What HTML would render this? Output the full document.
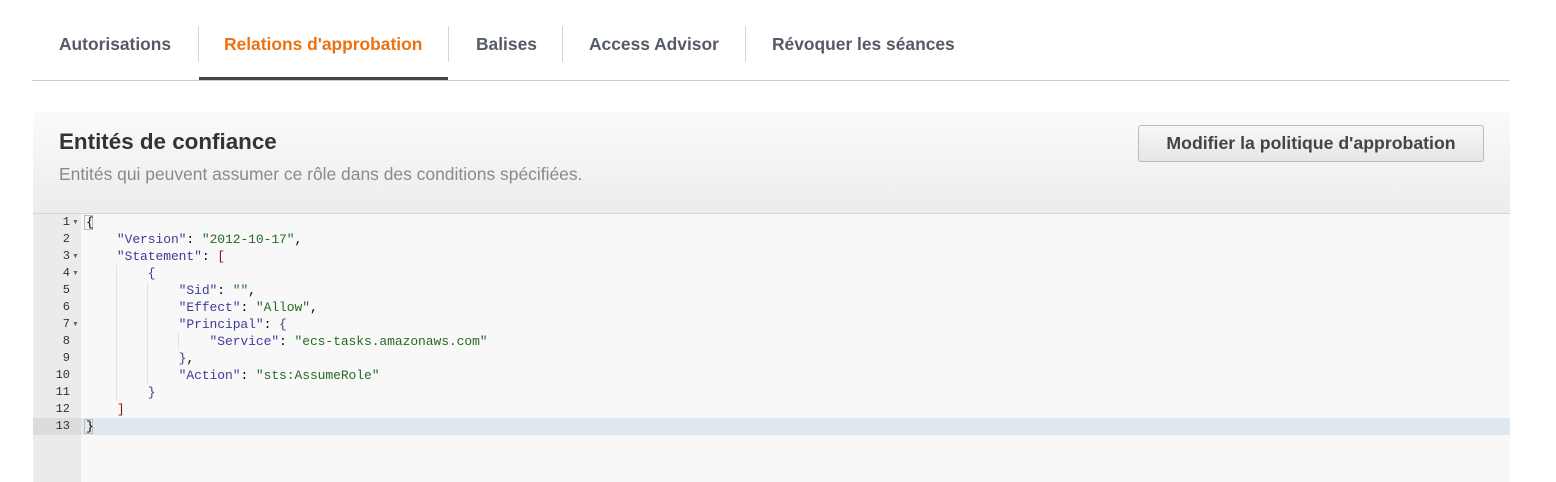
<!DOCTYPE html>
<html><head><meta charset="utf-8"><style>
body{margin:0;width:1556px;height:482px;background:#fff;font-family:"Liberation Sans",Arial,sans-serif;overflow:hidden;position:relative}
.tab{position:absolute;top:34px;font-size:17.4px;font-weight:bold;color:#545b64;white-space:nowrap}
.sep{position:absolute;top:26px;width:1px;height:36px;background:#d5d5d5}
.panel{position:absolute;left:33px;top:112px;width:1477px;height:101px;background:linear-gradient(#fafafa,#ececec);border-bottom:1px solid #d5d5d5}
.btn{position:absolute;left:1138px;top:125px;width:344px;height:35px;border:1px solid #bbb;border-radius:3px;background:linear-gradient(#f7f7f7,#e6e6e6);font-size:17.7px;font-weight:bold;color:#444;text-align:center;line-height:35px}
.gut{position:absolute;left:33px;top:214px;width:48px;height:268px;background:#ebebeb}
.ed{position:absolute;left:81px;top:214px;width:1429px;height:268px;background:#f8f8f8}
.hl{position:absolute;left:81px;top:418px;width:1429px;height:17px;background:#e0e8f0}
.hlg{position:absolute;left:33px;top:418px;width:48px;height:17px;background:#dcdcdc}
.ln{position:absolute;left:33px;width:37px;text-align:right;font:12px/17px "Liberation Mono",monospace;color:#333}
.fold{position:absolute;left:72px;font-size:7px;line-height:17px;color:#666}
pre{position:absolute;left:86px;top:214px;margin:0;font:13px/17px "Liberation Mono",monospace;letter-spacing:-0.08px;color:#000}
.k{color:#3d3d9a}.v{color:#236b23}.b{color:#8a1a1a}
</style></head><body>
<div class="tab" style="left:59px">Autorisations</div>
<div class="sep" style="left:198px"></div>
<div class="tab" style="left:224px;color:#ec7211">Relations d'approbation</div>
<div class="sep" style="left:448px"></div>
<div class="tab" style="left:476px">Balises</div>
<div class="sep" style="left:562px"></div>
<div class="tab" style="left:589px">Access Advisor</div>
<div class="sep" style="left:745px"></div>
<div class="tab" style="left:772px">Révoquer les séances</div>
<div style="position:absolute;left:199px;top:77px;width:249px;height:4px;background:#444"></div>
<div style="position:absolute;left:32px;top:80px;width:1478px;height:1px;background:#ccc"></div>
<div class="panel"></div>
<div style="position:absolute;left:59px;top:129px;font-size:22.4px;font-weight:bold;color:#333">Entités de confiance</div>
<div style="position:absolute;left:59px;top:164px;font-size:17.45px;color:#8a8a8a">Entités qui peuvent assumer ce rôle dans des conditions spécifiées.</div>
<div class="btn">Modifier la politique d'approbation</div>
<div class="gut"></div><div class="ed"></div><div class="hlg"></div><div class="hl"></div>
<div class="ln" style="top:214px">1</div><div class="ln" style="top:231px">2</div><div class="ln" style="top:248px">3</div><div class="ln" style="top:265px">4</div><div class="ln" style="top:282px">5</div><div class="ln" style="top:299px">6</div><div class="ln" style="top:316px">7</div><div class="ln" style="top:333px">8</div><div class="ln" style="top:350px">9</div><div class="ln" style="top:367px">10</div><div class="ln" style="top:384px">11</div><div class="ln" style="top:401px">12</div><div class="ln" style="top:418px">13</div>
<div class="fold" style="top:214px">▼</div><div class="fold" style="top:248px">▼</div><div class="fold" style="top:265px">▼</div><div class="fold" style="top:316px">▼</div>
<div style="position:absolute;left:116px;top:265px;width:1px;height:136px;background:#e3e3e3"></div>
<div style="position:absolute;left:147px;top:282px;width:1px;height:102px;background:#e3e3e3"></div>
<div style="position:absolute;left:178px;top:333px;width:1px;height:17px;background:#e3e3e3"></div>
<div style="position:absolute;left:84px;top:215px;width:9px;height:15px;border:1px solid #bbb;box-sizing:border-box"></div>
<div style="position:absolute;left:84px;top:419px;width:9px;height:15px;border:1px solid #bbb;box-sizing:border-box"></div>
<pre>{
    <span class="k">"Version"</span>: <span class="v">"2012-10-17"</span>,
    <span class="k">"Statement"</span>: <span class="b">[</span>
        <span class="k">{</span>
            <span class="k">"Sid"</span>: <span class="v">""</span>,
            <span class="k">"Effect"</span>: <span class="v">"Allow"</span>,
            <span class="k">"Principal"</span>: <span class="k">{</span>
                <span class="k">"Service"</span>: <span class="v">"ecs-tasks.amazonaws.com"</span>
            <span class="k">}</span>,
            <span class="k">"Action"</span>: <span class="v">"sts:AssumeRole"</span>
        <span class="k">}</span>
    <span class="b">]</span>
}</pre>
</body></html>
